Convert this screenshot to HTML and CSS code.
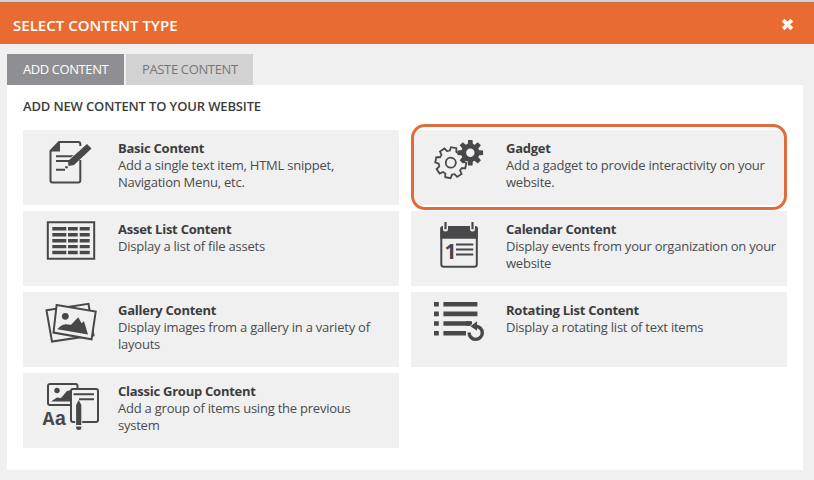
FILE: index.html
```html
<!DOCTYPE html>
<html lang="en">
<head>
<meta charset="utf-8">
<title>Select Content Type</title>
<link rel="stylesheet" href="styles.css">
</head>
<body>
<div class="dialog">
  <header class="dialog-header">
    <h1>SELECT CONTENT TYPE</h1>
    <svg class="close" viewBox="0 0 12 12"><path d="M2 2l8 8M10 2l-8 8"/></svg>
  </header>
  <main class="dialog-body">
    <nav class="tabs">
      <span class="tab active">ADD CONTENT</span>
      <span class="tab paste">PASTE CONTENT</span>
    </nav>
    <section class="panel">
      <h2>ADD NEW CONTENT TO YOUR WEBSITE</h2>
      <div class="cards">
        <article class="card">
          <svg class="icon" viewBox="0 0 95 75">
            <path class="line" d="M57.300 16V14q0-2-2-2H36L27.500 21V50.500q0 2 2 2H55.300q2 0 2-2V30"/>
            <path class="fill" d="M37 11.500V21.500H27z"/>
            <path class="line" d="M33 26.300H52M33 31H47M33 39.700H42"/>
            <path class="halo" d="M48 32L66.500 16.500"/>
            <path class="fill" d="M64 14L68.500 18.500 51 35 45.500 36 45 31z"/>
            <circle class="fill" cx="43.500" cy="37.300" r="1.300"/>
          </svg>
          <div class="copy"><h3>Basic Content</h3><p>Add a single text item, HTML snippet,<br>Navigation Menu, etc.</p></div>
        </article>
        <article class="card selected">
          <svg class="icon" viewBox="0 0 95 75">
            <defs>
              <path id="tooth" d="M-4.600-11.100L-3.300-11.700-2.700-15.300H2.700L3.300-11.700 4.600-11.100"/>
              <path id="cog" d="M-2.700-7L-2.200-12.800H2.200L2.700-7z"/>
            </defs>
            <g class="line gear" transform="translate(39.800 32.700) rotate(11)">
              <use href="#tooth"/><use href="#tooth" transform="rotate(45)"/><use href="#tooth" transform="rotate(90)"/><use href="#tooth" transform="rotate(135)"/>
              <use href="#tooth" transform="rotate(180)"/><use href="#tooth" transform="rotate(225)"/><use href="#tooth" transform="rotate(270)"/><use href="#tooth" transform="rotate(315)"/>
              <circle r="5"/>
            </g>
            <circle class="ground" cx="59.300" cy="22.800" r="10"/>
            <g class="fill" transform="translate(59.300 22.800)">
              <circle class="ring" r="6.700"/>
              <use href="#cog"/><use href="#cog" transform="rotate(45)"/><use href="#cog" transform="rotate(90)"/><use href="#cog" transform="rotate(135)"/>
              <use href="#cog" transform="rotate(180)"/><use href="#cog" transform="rotate(225)"/><use href="#cog" transform="rotate(270)"/><use href="#cog" transform="rotate(315)"/>
            </g>
          </svg>
          <div class="copy"><h3>Gadget</h3><p>Add a gadget to provide interactivity on your<br>website.</p></div>
        </article>
        <article class="card">
          <svg class="icon" viewBox="0 0 95 75">
            <path class="line" d="M24.800 11.200H71.200V47.800H24.800z"/>
            <path class="rows" d="M29.300 17.700H43.300M45 17.700H54.700M56.700 17.700H66.700M29.300 23.700H43.300M45 23.700H54.700M56.700 23.700H66.700M29.300 29.700H43.300M45 29.700H54.700M56.700 29.700H66.700M29.300 35.600H43.300M45 35.600H54.700M56.700 35.600H66.700M29.300 41.500H43.300M45 41.500H54.700M56.700 41.500H66.700"/>
          </svg>
          <div class="copy"><h3>Asset List Content</h3><p>Display a list of file assets</p></div>
        </article>
        <article class="card">
          <svg class="icon" viewBox="0 0 95 75">
            <rect class="line" x="30.300" y="16" width="35.500" height="39.700" rx="2.500"/>
            <path class="fill" d="M29.300 27.700V17.500q0-2.500 2.500-2.500H64.300q2.500 0 2.500 2.500V27.700z"/>
            <path class="halo ring-gap" d="M34.500 13V18M61.500 13V18"/>
            <path class="line hanger" d="M34.500 11V18.300M61.500 11V18.300"/>
            <text class="day" x="33.500" y="48.300">1</text>
            <path class="line" d="M45 33.500H62.300M45 38.500H62.300M45 43.500H62.300"/>
          </svg>
          <div class="copy"><h3>Calendar Content</h3><p>Display events from your organization on your<br>website</p></div>
        </article>
        <article class="card">
          <svg class="icon" viewBox="0 0 95 75">
            <g transform="translate(0 -2.700)">
              <path class="line" d="M23.500 21L65.500 14.500 70.500 46 29 52.300z"/>
              <path class="line ground" d="M33.600 15.800L72.700 22.300 68.600 50 30.500 43.300z"/>
              <circle class="fill" cx="42.300" cy="27" r="3.400"/>
              <path class="fill" d="M34.300 40Q38 35.500 42.500 35L48 35.500 55.300 28 58.500 34 61 32 65 45.300z"/>
            </g>
          </svg>
          <div class="copy"><h3>Gallery Content</h3><p>Display images from a gallery in a variety of<br>layouts</p></div>
        </article>
        <article class="card">
          <svg class="icon" viewBox="0 0 95 75">
            <path class="bars" d="M23 12.300H27.800M32.400 12.300H66.400M23 21.900H27.800M32.400 21.900H66.400M23 31.500H27.800M32.400 31.500H61M23 41.200H27.800M32.400 41.200H55"/>
            <circle class="ground" cx="64.500" cy="40.800" r="9.300"/>
            <path class="bars" d="M55 31.500H59.500"/>
            <path class="arrow" d="M58.100 40.500A6.600 6.600 0 1 0 64.800 34.200"/>
            <path class="fill" d="M59.500 34.200L66 29.300V38.800z"/>
          </svg>
          <div class="copy"><h3>Rotating List Content</h3><p>Display a rotating list of text items</p></div>
        </article>
        <article class="card">
          <svg class="icon" viewBox="0 0 95 75">
            <rect class="line" x="25" y="11" width="29.500" height="21" rx="2"/>
            <circle class="fill" cx="34" cy="17.500" r="2.700"/>
            <path class="fill" d="M28 28.500L34 24.500 38 25 44 18 48 17V28.500z"/>
            <rect class="line ground" x="48" y="16" width="27" height="33" rx="2"/>
            <path class="line" d="M50.500 21.300H71M56 26.300H71"/>
            <path class="halo" d="M55.700 31V56"/>
            <path class="fill" d="M55.700 27L58.300 32V52H53.100V32zM53.100 53.500H58.300V54.500q0 2.500-2.600 2.500T53.100 54.500z"/>
            <text class="letters" x="19.500" y="52" textLength="24" lengthAdjust="spacingAndGlyphs">Aa</text>
          </svg>
          <div class="copy"><h3>Classic Group Content</h3><p>Add a group of items using the previous<br>system</p></div>
        </article>
      </div>
    </section>
  </main>
</div>
</body>
</html>
```
FILE: styles.css
```css
* { box-sizing: border-box; }
body {
  margin: 0;
  height: 480px;
  overflow: hidden;
  background: #f0f0f0;
  color: #3c3c3e;
  font: 13px/17px "Open Sans", sans-serif;
}
h1, h2, h3, p { margin: 0; }
.dialog { border-top: 2px solid #d3d1d1; }
.dialog-header {
  display: flex;
  align-items: center;
  justify-content: space-between;
  height: 42px;
  padding: 2px 20px 0 13px;
  background: #e96b31;
  border-top: 1px solid #bd7151;
  color: #fff;
}
h1 { font-size: 15px; line-height: 20px; font-weight: 600; letter-spacing: 0.03px; }
.close { width: 13px; height: 13px; fill: none; stroke: #fff; stroke-width: 3.5; }
.dialog-body { height: 436px; padding: 10px 11px 0 7px; }
.tabs { display: flex; gap: 2px; height: 31px; }
.tab { width: 117px; padding-left: 16px; line-height: 31px; letter-spacing: -0.42px; background: #d2d2d2; color: #77777a; }
.tab.active { background: #8f8f93; color: #fff; }
.tab.paste { width: 127px; letter-spacing: -0.35px; }
.panel { height: 385px; padding: 13px 16px 0; background: #fff; }
h2 { font-size: 13px; line-height: 17px; font-weight: 600; letter-spacing: -0.14px; }
.cards { display: grid; grid-template-columns: 376px 376px; grid-auto-rows: 75px; gap: 6px 12px; margin-top: 15px; }
.card { position: relative; display: flex; background: #f0f0f0; }
.card.selected::after {
  content: "";
  position: absolute;
  inset: -6px 0 -5px;
  border: 3px solid #df6c3b;
  border-radius: 14px;
}
.card.selected { z-index: 1; border-radius: 12px; }
.icon { flex: none; width: 95px; height: 75px; }
.copy { padding-top: 10px; white-space: nowrap; }
h3 { font-size: 13px; line-height: 17px; font-weight: 700; letter-spacing: -0.25px; }
p { letter-spacing: -0.23px; color: #4b4b4d; }
.line { fill: none; stroke: #48484a; stroke-width: 2; }
.line.gear { stroke-width: 1.8; }
.line.hanger { stroke-width: 2.2; }
.fill { fill: #48484a; }
.ground { fill: #f0f0f0; }
.halo { fill: none; stroke: #f0f0f0; stroke-width: 7; }
.halo.ring-gap { stroke-width: 5; stroke-linecap: round; }
.ring { fill: none; stroke: #48484a; stroke-width: 5; }
.rows { stroke: #48484a; stroke-width: 3.4; }
.bars { stroke: #48484a; stroke-width: 4.6; }
.arrow { fill: none; stroke: #48484a; stroke-width: 3.4; }
.day { font: 700 21px "Open Sans", sans-serif; fill: #48484a; }
.letters { font: 700 21px "Liberation Mono", monospace; fill: #48484a; }
```
